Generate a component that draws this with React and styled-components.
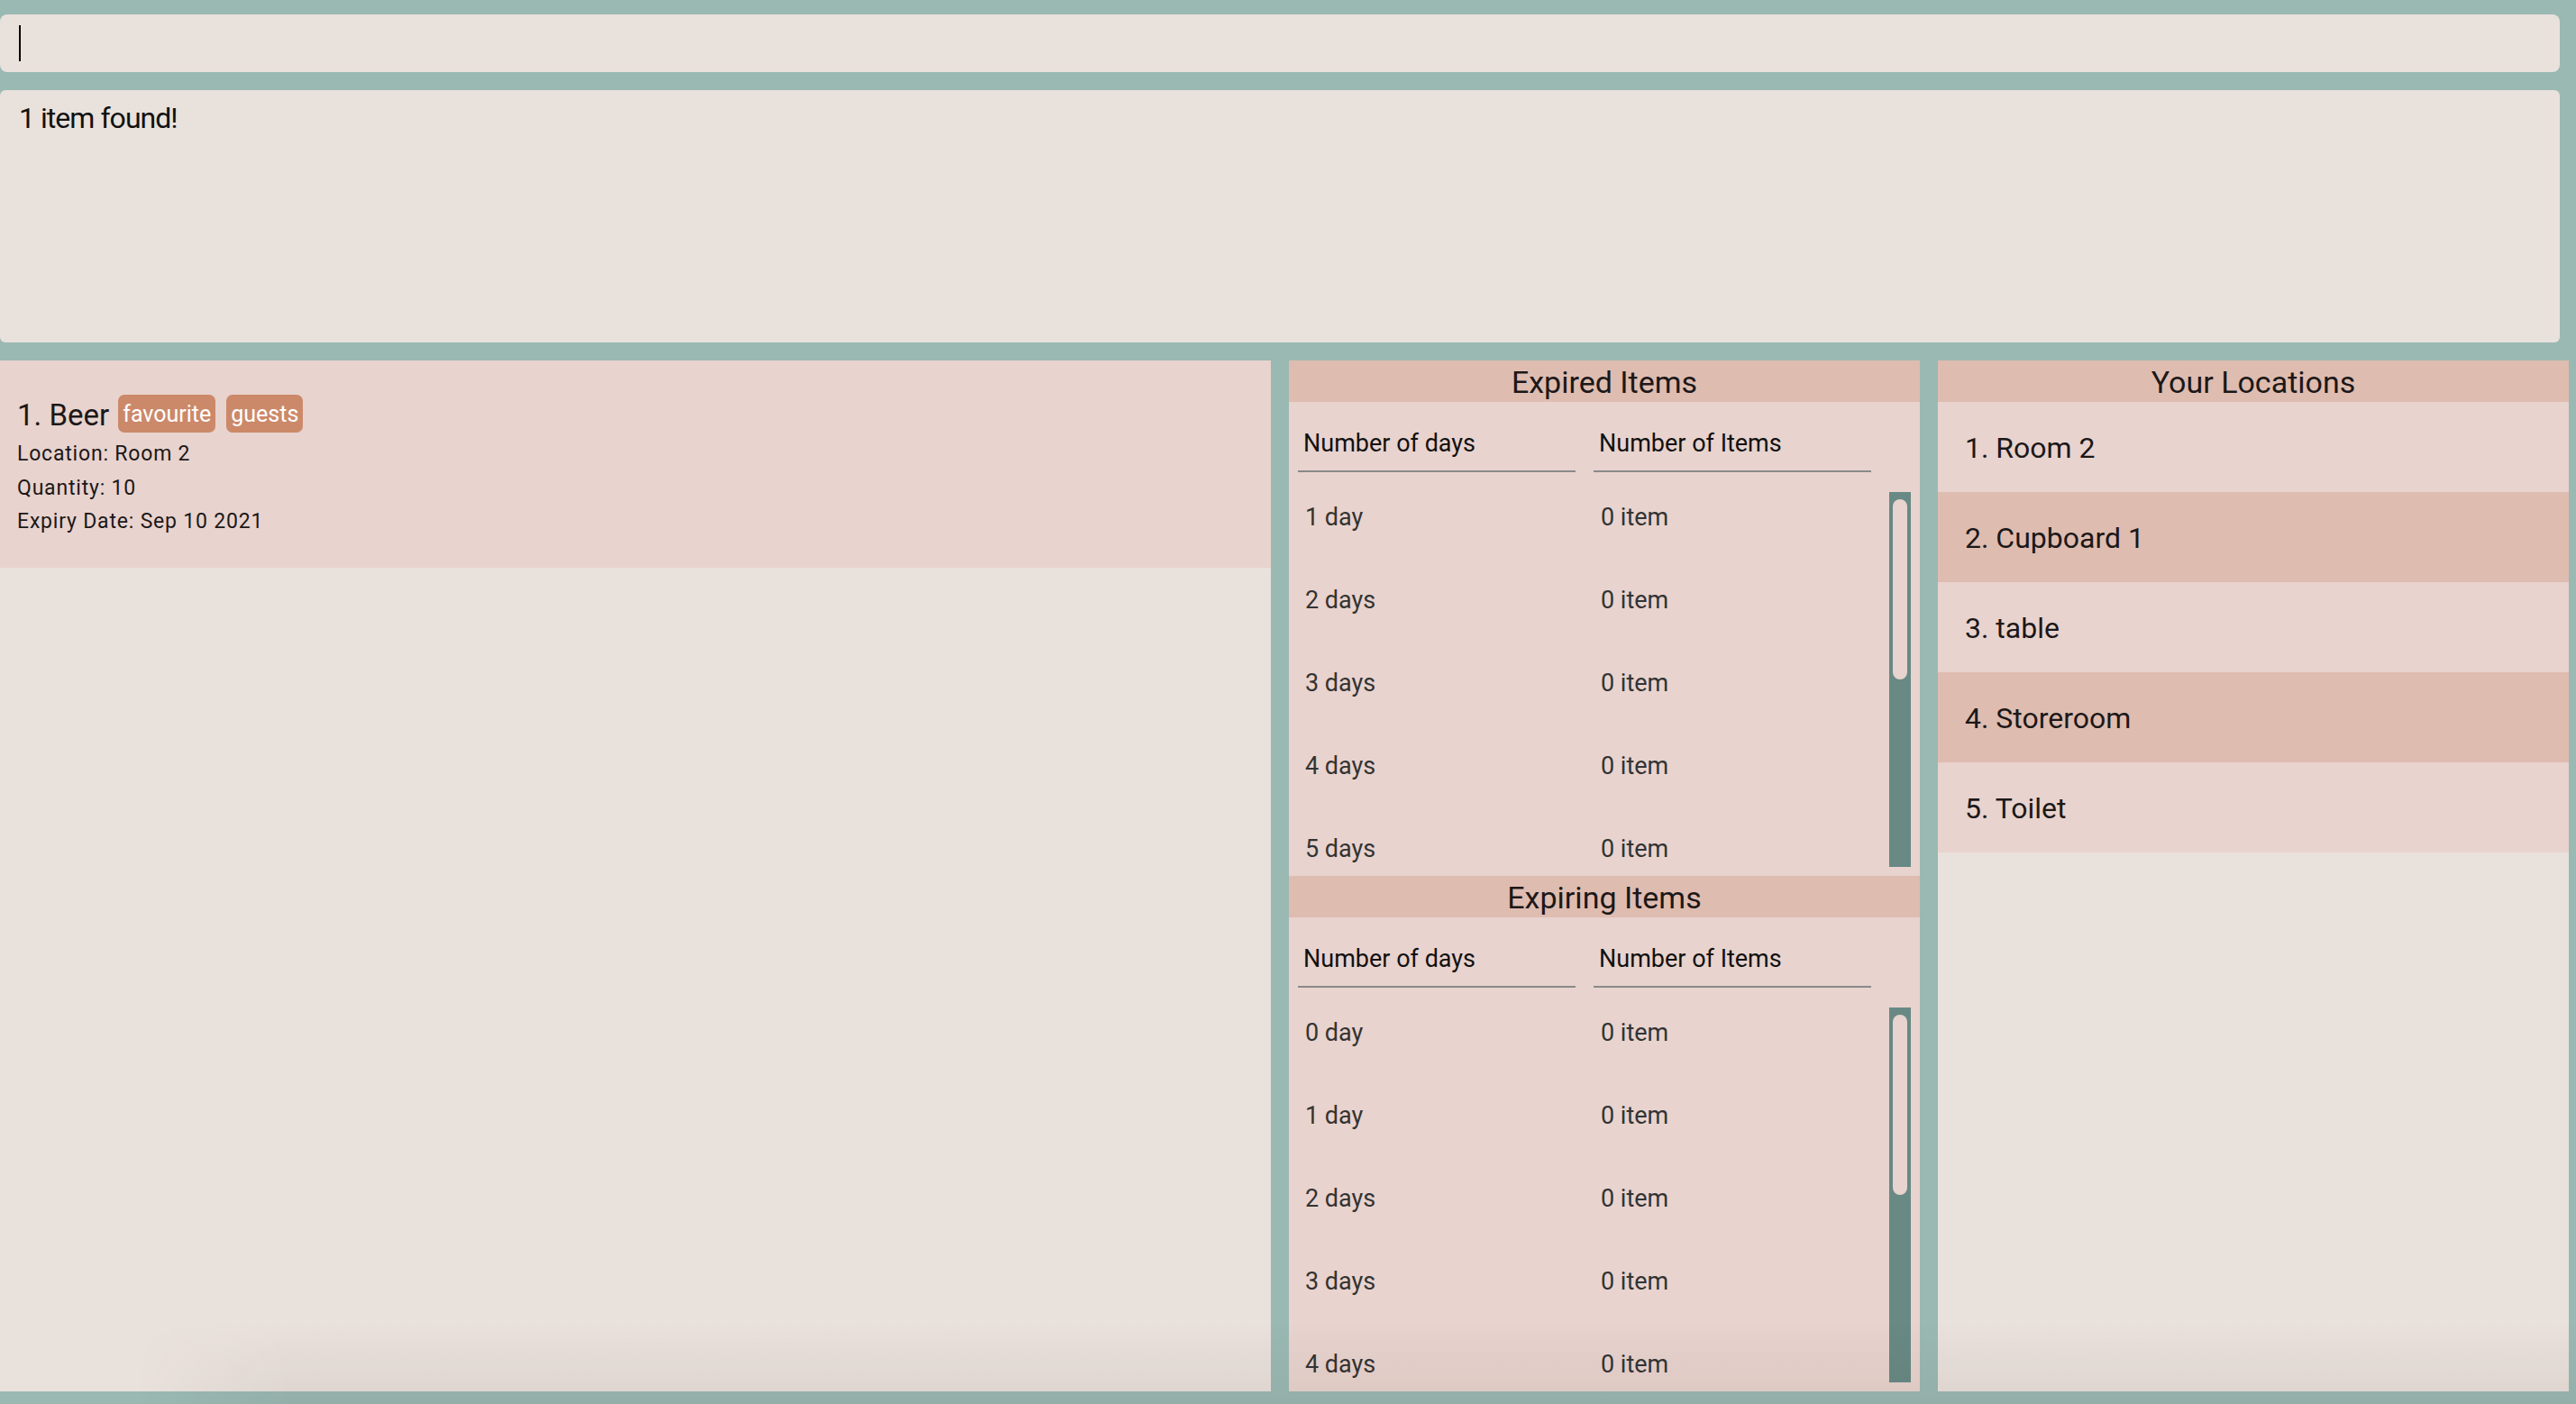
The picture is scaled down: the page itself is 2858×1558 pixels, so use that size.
import React from 'react';
import styled, {createGlobalStyle} from 'styled-components';

// only the rows that fit the list viewport are shown, as in the app
const expired = ['1 day', '2 days', '3 days', '4 days', '5 days'];
const expiring = ['0 day', '1 day', '2 days', '3 days', '4 days'];
const locations = ['Room 2', 'Cupboard 1', 'table', 'Storeroom', 'Toilet'];

const GlobalStyle = createGlobalStyle`
    html, body{
        margin:0;
        padding:0;
    }
    body{
        font-family: Roboto, "Liberation Sans", sans-serif;
        color:#1c1818;
        background:#9ab9b3;
    }
`;

const StatsSection = ({title, rows}) =>{
    return(
        <SSection>
            <SBand>{title}</SBand>
            <SHeadRow>
                <SHeadCell>Number of days</SHeadCell>
                <SHeadCell>Number of Items</SHeadCell>
            </SHeadRow>
            <SBody>
                <SRows>
                    {rows.map((r) => (
                        <SRow key={r}>
                            <SCell>{r}</SCell>
                            <SCell>0 item</SCell>
                        </SRow>
                    ))}
                </SRows>
                <STrack>
                    <SThumb/>
                </STrack>
            </SBody>
        </SSection>
    );
};

const App = () =>{
    return(
        <SPage>
            <GlobalStyle/>
            <SCommand><SCaret/></SCommand>
            <SResult>1 item found!</SResult>
            <SLower>
                <SItemPanel>
                    <SCard>
                        <STitleRow>
                            <STitle>1. Beer</STitle>
                            <STag>favourite</STag>
                            <STag>guests</STag>
                        </STitleRow>
                        <SDetail>Location: Room 2</SDetail>
                        <SDetail>Quantity: 10</SDetail>
                        <SDetail>Expiry Date: Sep 10 2021</SDetail>
                    </SCard>
                </SItemPanel>

                <SStatsPanel>
                    <StatsSection title="Expired Items" rows={expired}/>
                    <StatsSection title="Expiring Items" rows={expiring}/>
                </SStatsPanel>

                <SLocationPanel>
                    <SBand>Your Locations</SBand>
                    {locations.map((l, i) => (
                        <SLocation key={l} alt={i % 2 === 1}>{i + 1}. {l}</SLocation>
                    ))}
                </SLocationPanel>
            </SLower>
        </SPage>
    );
};

const SPage = styled.div`
    width:2858px;
    height:1558px;
    box-sizing:border-box;
    padding:16px 8px 14px 0px;
    display:flex;
    flex-direction:column;
    gap:20px;
    background:#9ab9b3;
    overflow:hidden;
`;

const SCommand = styled.div`
    height:64px;
    flex-shrink:0;
    margin-right:10px;
    background:#e9e1dc;
    border-radius:8px;
    display:flex;
    align-items:center;
`;

const SCaret = styled.div`
    width:2px;
    height:40px;
    margin-left:21px;
    background:#000;
`;

const SResult = styled.div`
    height:280px;
    flex-shrink:0;
    margin-right:10px;
    box-sizing:border-box;
    padding:11px 21px;
    background:#e9e1dc;
    border-radius:6px;
    font-size:32px;
    line-height:40px;
    letter-spacing:-0.03em;
    color:#111;
`;

const SLower = styled.div`
    flex:1;
    min-height:0;
    display:grid;
    grid-template-columns:1410px 700px 700px;
    grid-template-rows:100%;
    gap:20px;
    position:relative;
    &::after{
        content:'';
        position:absolute;
        left:0;
        right:-8px;
        bottom:-14px;
        height:92px;
        pointer-events:none;
        background:linear-gradient(to bottom, rgba(70,50,40,0), rgba(70,50,40,0.07));
        -webkit-mask-image:linear-gradient(to right, transparent 150px, #000 320px);
        mask-image:linear-gradient(to right, transparent 150px, #000 320px);
    }
`;

const SItemPanel = styled.div`
    background:#e9e1dc;
`;

const SCard = styled.div`
    height:230px;
    box-sizing:border-box;
    padding:38px 19px 0px;
    background:#e8d3ce;
`;

const STitleRow = styled.div`
    display:flex;
    align-items:flex-start;
    gap:12px;
    height:42px;
    margin-bottom:5px;
`;

const STitle = styled.span`
    margin-top:2px;
    margin-right:-2px;
    font-size:33px;
    line-height:42px;
    color:#1c1818;
`;

const STag = styled.span`
    height:42px;
    padding:0px 5px;
    display:flex;
    align-items:center;
    border-radius:7px;
    background:#cc896a;
    color:#fff;
    font-size:25px;
`;

const SDetail = styled.div`
    font-size:23px;
    line-height:37.5px;
    letter-spacing:0.035em;
    color:#1c1818;
`;

const SStatsPanel = styled.div`
    display:flex;
    flex-direction:column;
    background:#e8d3ce;
`;

const SSection = styled.div`
    flex:1;
    display:flex;
    flex-direction:column;
    min-height:0;
`;

const SBand = styled.div`
    height:46px;
    flex-shrink:0;
    box-sizing:border-box;
    padding-top:2px;
    background:#dfbcb0;
    text-align:center;
    font-size:34px;
    line-height:44px;
    color:#1c1818;
`;

const SHeadRow = styled.div`
    display:grid;
    grid-template-columns:308px 308px;
    gap:20px;
    padding:29px 10px 0px;
`;

const SHeadCell = styled.div`
    padding:0px 0px 13px 6px;
    border-bottom:2px solid #8a8a8a;
    font-size:27px;
    line-height:34px;
    color:#111;
`;

const SBody = styled.div`
    flex:1;
    min-height:0;
    display:flex;
    gap:20px;
    padding:22px 10px 10px;
`;

const SRows = styled.div`
    flex:1;
    overflow:hidden;
`;

const SRow = styled.div`
    height:92px;
    box-sizing:border-box;
    padding-top:11px;
    display:grid;
    grid-template-columns:308px 308px;
    gap:20px;
`;

const SCell = styled.div`
    padding-left:8px;
    font-size:27px;
    line-height:34px;
    color:#333;
`;

const STrack = styled.div`
    width:24px;
    flex-shrink:0;
    background:#688984;
    display:flex;
    justify-content:center;
`;

const SThumb = styled.div`
    width:16px;
    height:200px;
    margin-top:8px;
    border-radius:8px;
    background:#e8d3ce;
`;

const SLocationPanel = styled.div`
    display:flex;
    flex-direction:column;
    background:#e9e1dc;
`;

const SLocation = styled.div`
    height:100px;
    flex-shrink:0;
    box-sizing:border-box;
    padding:2px 0px 0px 30px;
    display:flex;
    align-items:center;
    background:${(p) => (p.alt ? '#dfbcb0' : '#e8d3ce')};
    font-size:32px;
    color:#1c1818;
`;

export default App;
